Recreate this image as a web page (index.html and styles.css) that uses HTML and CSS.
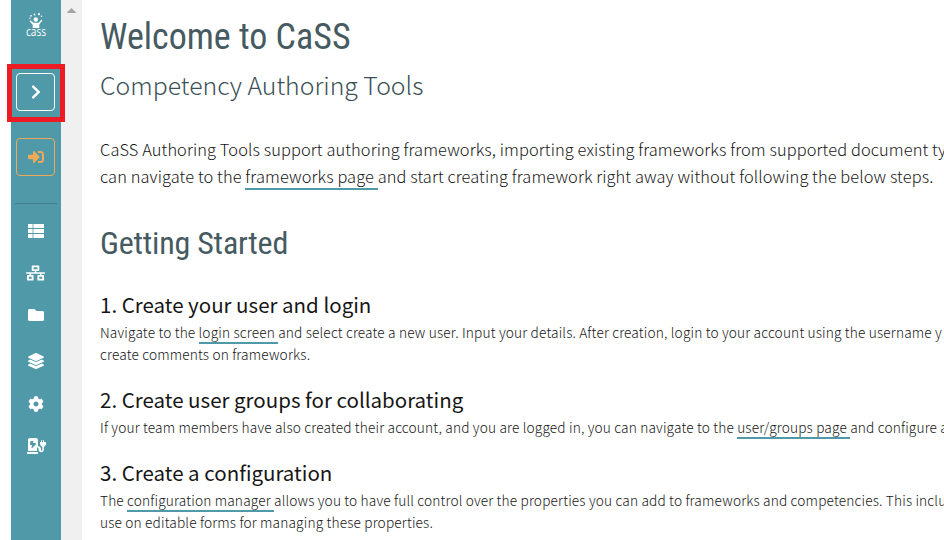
FILE: index.html
```html
<!DOCTYPE html>
<html lang="en">
<head>
<meta charset="utf-8">
<title>CaSS Authoring Tools</title>
<link rel="stylesheet" href="styles.css">
</head>
<body>
<div class="app">
  <nav class="sidebar">
    <svg class="logo" viewBox="0 0 22 25">
      <g fill="#fff"><circle cx="6" cy="3.800" r=".9"/><circle cx="9.500" cy="2.500" r=".9"/><circle cx="14" cy="2.200" r="1.100"/><circle cx="16.500" cy="4.300" r=".8"/><circle cx="5" cy="6.200" r=".7"/><circle cx="10.800" cy="7.500" r="2.200"/>
      <path d="M5.200 8.200l3.500 2.500h5l2.800-3.200.8 1-3 4V16H7.700v-3.300L4.500 9.200z"/></g>
      <text x="1" y="24" textLength="20" lengthAdjust="spacingAndGlyphs">cass</text>
    </svg>
    <a class="button expand"><svg viewBox="0 0 320 512"><path d="M285 273L91 467c-9 9-25 9-34 0l-23-22c-9-10-9-25 0-34l154-155L34 101c-9-9-9-24 0-34l23-22c9-10 25-10 34 0l194 194c10 9 10 25 0 34z"/></svg></a>
    <a class="button login"><svg viewBox="0 0 512 512"><path d="M416 448h-84c-6.600 0-12-5.400-12-12v-40c0-6.600 5.400-12 12-12h84c17.700 0 32-14.300 32-32V160c0-17.700-14.300-32-32-32h-84c-6.600 0-12-5.400-12-12V76c0-6.600 5.400-12 12-12h84c53 0 96 43 96 96v192c0 53-43 96-96 96zm-47-209L201 71c-15-15-41-4.500-41 17v96H24c-13.300 0-24 10.700-24 24v96c0 13.300 10.700 24 24 24h136v96c0 21.500 26 32 41 17l168-168c9.300-9.400 9.300-24.600 0-34z"/></svg></a>
    <hr>
    <div class="menu">
      <a><svg viewBox="0 0 16 14"><path d="M0 0h4.600v4H0zM5.400 0H16v4H5.400zM0 5h4.600v4H0zM5.400 5H16v4H5.400zM0 10h4.600v4H0zM5.400 10H16v4H5.400z"/></svg></a>
      <a><svg class="wide" viewBox="0 0 640 512"><path d="M640 264v-16c0-8.800-7.200-16-16-16H344v-40h72c17.700 0 32-14.300 32-32V32c0-17.700-14.300-32-32-32H224c-17.700 0-32 14.300-32 32v128c0 17.700 14.300 32 32 32h72v40H16c-8.800 0-16 7.200-16 16v16c0 8.800 7.200 16 16 16h104v40H64c-17.700 0-32 14.300-32 32v128c0 17.700 14.300 32 32 32h160c17.700 0 32-14.300 32-32V352c0-17.700-14.300-32-32-32h-56v-40h304v40h-56c-17.700 0-32 14.300-32 32v128c0 17.700 14.300 32 32 32h160c17.700 0 32-14.300 32-32V352c0-17.700-14.300-32-32-32h-56v-40h104c8.800 0 16-7.200 16-16zM256 128V64h128v64H256zm-64 320H96v-64h96v64zm352 0h-96v-64h96v64z"/></svg></a>
      <a><svg viewBox="0 0 512 512"><path d="M464 128H272l-64-64H48C21.500 64 0 85.500 0 112v288c0 26.500 21.500 48 48 48h416c26.500 0 48-21.500 48-48V176c0-26.500-21.500-48-48-48z"/></svg></a>
      <a><svg viewBox="0 0 512 512"><path d="M12 148l232 105c8 3 16 3 24 0l232-105c16-7 16-33 0-40L268 3c-8-4-16-4-24 0L12 108c-16 7-16 33 0 40zm488 88l-58-26-161 73c-16 7-34 7-50 0L70 210l-58 26c-16 7-16 33 0 40l232 105c8 3 16 3 24 0l232-105c16-7 16-33 0-40zm0 128l-58-26-161 73c-16 7-34 7-50 0L70 338l-58 26c-16 7-16 33 0 40l232 105c8 3 16 3 24 0l232-105c16-7 16-33 0-40z"/></svg></a>
      <a><svg viewBox="0 0 512 512"><path d="M487.400 315.700l-42.600-24.600c4.300-23.200 4.300-47 0-70.200l42.600-24.600c4.900-2.800 7.100-8.600 5.500-14-11.100-35.600-30-67.800-54.700-94.600-3.800-4.100-10-5.100-14.800-2.300L380.800 110c-17.900-15.400-38.500-27.300-60.800-35.100V25.800c0-5.600-3.900-10.500-9.400-11.700-36.700-8.200-74.300-7.800-109.200 0-5.500 1.200-9.400 6.100-9.400 11.700V75c-22.200 7.900-42.800 19.800-60.800 35.100L88.700 85.500c-4.900-2.800-11-1.900-14.800 2.300-24.700 26.700-43.600 58.900-54.700 94.600-1.700 5.400.6 11.200 5.500 14L67.300 221c-4.300 23.200-4.300 47 0 70.200l-42.600 24.600c-4.900 2.800-7.100 8.600-5.500 14 11.100 35.600 30 67.800 54.700 94.600 3.800 4.100 10 5.100 14.800 2.300l42.600-24.600c17.900 15.400 38.500 27.300 60.800 35.100v49.200c0 5.600 3.900 10.500 9.400 11.700 36.700 8.200 74.300 7.800 109.200 0 5.500-1.200 9.400-6.100 9.400-11.700v-49.200c22.200-7.900 42.800-19.800 60.800-35.100l42.600 24.600c4.900 2.800 11 1.900 14.800-2.300 24.700-26.700 43.600-58.900 54.700-94.600 1.500-5.500-.7-11.300-5.600-14.100zM256 336c-44.100 0-80-35.900-80-80s35.900-80 80-80 80 35.900 80 80-35.900 80-80 80z"/></svg></a>
      <a><svg class="charger" viewBox="0 0 576 512"><path d="M336 448H16c-9 0-16 7-16 16v32c0 9 7 16 16 16h320c9 0 16-7 16-16v-32c0-9-7-16-16-16zm208-320V80c0-9-7-16-16-16s-16 7-16 16v48h-32V80c0-9-7-16-16-16s-16 7-16 16v48h-16c-9 0-16 7-16 16v35c0 49 31 93 76 106v91c0 15-12 25-25 24-11-1-19-11-19-23v-25c0-50-38-88-88-88h-8V64c0-35-29-64-64-64H96C61 0 32 29 32 64v352h288V304h8c22 0 40 18 40 40v20c0 47 35 90 82 92 50 2 90-38 90-87v-86c43-12 68-52 68-104v-35c0-9-7-16-16-16zm-261 80L166 316c-3 3-7 4-11 4-8 0-14-6-12-13l23-84h-57c-8 0-14-6-13-12l16-104c1-6 6-11 13-11h68c8 0 14 6 12 13l-18 51h82c12 0 20 11 14 20z"/></svg></a>
    </div>
    <span class="highlight"></span>
  </nav>
  <div class="scrollbar"><span class="arrow"></span></div>
  <main>
    <h1>Welcome to CaSS</h1>
    <p class="subtitle">Competency Authoring Tools</p>
    <p class="intro">CaSS Authoring Tools support authoring frameworks, importing existing frameworks from supported document ty<br>can navigate to the <a class="link">frameworks page </a>and start creating framework right away without following the below steps.</p>
    <h2>Getting Started</h2>
    <section>
      <h3>1. Create your user and login</h3>
      <p>Navigate to the <a class="link">login screen </a>and select create a new user. Input your details. After creation, login to your account using the username y<br>create comments on frameworks.</p>
    </section>
    <section>
      <h3>2. Create user groups for collaborating</h3>
      <p>If your team members have also created their account, and you are logged in, you can navigate to the <a class="link">user/groups page </a>and configure a</p>
    </section>
    <section>
      <h3>3. Create a configuration</h3>
      <p>The <a class="link">configuration manager </a>allows you to have full control over the properties you can add to frameworks and competencies. This inclu<br>use on editable forms for managing these properties.</p>
    </section>
  </main>
</div>
</body>
</html>
```
FILE: styles.css
```css
* { box-sizing: border-box; }
html, body { margin: 0; height: 540px; overflow: hidden; background: #fff; }
body { font-family: "Noto Sans CJK SC", "Noto Sans", sans-serif; color: #161616; }
.app { display: flex; height: 540px; padding-left: 11px; overflow: hidden; }
.sidebar { position: relative; flex: 0 0 50px; padding-right: 1px; background: #5099a9; display: flex; flex-direction: column; align-items: center; }
.sidebar svg { display: block; fill: #fff; overflow: visible; }
.logo { width: 22px; height: 25px; margin-top: 12px; }
.logo text { font: 13px "Open Sans", sans-serif; fill: #fff; }
.button { width: 39px; height: 38px; border: 1px solid #fff; border-radius: 4px; display: flex; align-items: center; justify-content: center; }
.expand { margin-top: 36px; }
.expand svg { width: 10px; height: 16px; }
.login { margin-top: 27px; border-color: #f0a956; }
.sidebar .login svg { width: 16px; height: 16px; fill: #f0a956; }
hr { width: 42px; height: 1px; border: 0; margin: 27px 0 0 1px; background: #437d8b; }
.menu { display: grid; grid-template-rows: 42px 42px 42px 49px 38px 46px; margin-top: 6px; }
.menu a { display: flex; align-items: center; justify-content: center; }
.menu svg { width: 16px; height: 16px; }
.menu svg.wide { width: 19px; }
.menu svg.charger { width: 18px; }
.highlight { position: absolute; left: -4px; top: 64px; width: 58px; height: 58px; border: 5px solid #ed1c24; }
.scrollbar { flex: 0 0 21px; background: #f0f0f0; display: flex; justify-content: center; padding-top: 8px; }
.arrow { width: 10px; height: 5px; background: #a3a3a3; clip-path: polygon(50% 0, 100% 100%, 0 100%); }
main { flex: 1; min-width: 0; padding: 16px 0 0 18px; white-space: nowrap; overflow: hidden; }
h1, h2, h3, p { margin: 0; }
h1, h2 { font-family: "Roboto Condensed", Roboto, sans-serif; font-stretch: 75%; font-weight: 400; color: #465a61; }
h1 { font-size: 36px; line-height: 43px; }
h2 { font-size: 32px; line-height: 40px; margin-top: 33px; letter-spacing: -0.2px; }
.subtitle { font-size: 24.8px; line-height: 34px; margin-top: 8px; font-weight: 300; color: #3b4f56; }
.intro { font-size: 16.4px; letter-spacing: 0.1px; line-height: 27px; margin-top: 35px; font-weight: 300; }
section { margin-top: 18px; }
h2 + section { margin-top: 25px; }
h3 { font-size: 20.5px; line-height: 33px; font-weight: 400; }
section p { font-size: 13.7px; line-height: 22px; font-weight: 300; letter-spacing: 0.16px; }
.link { border-bottom: 2px solid #5099a9; }
```
